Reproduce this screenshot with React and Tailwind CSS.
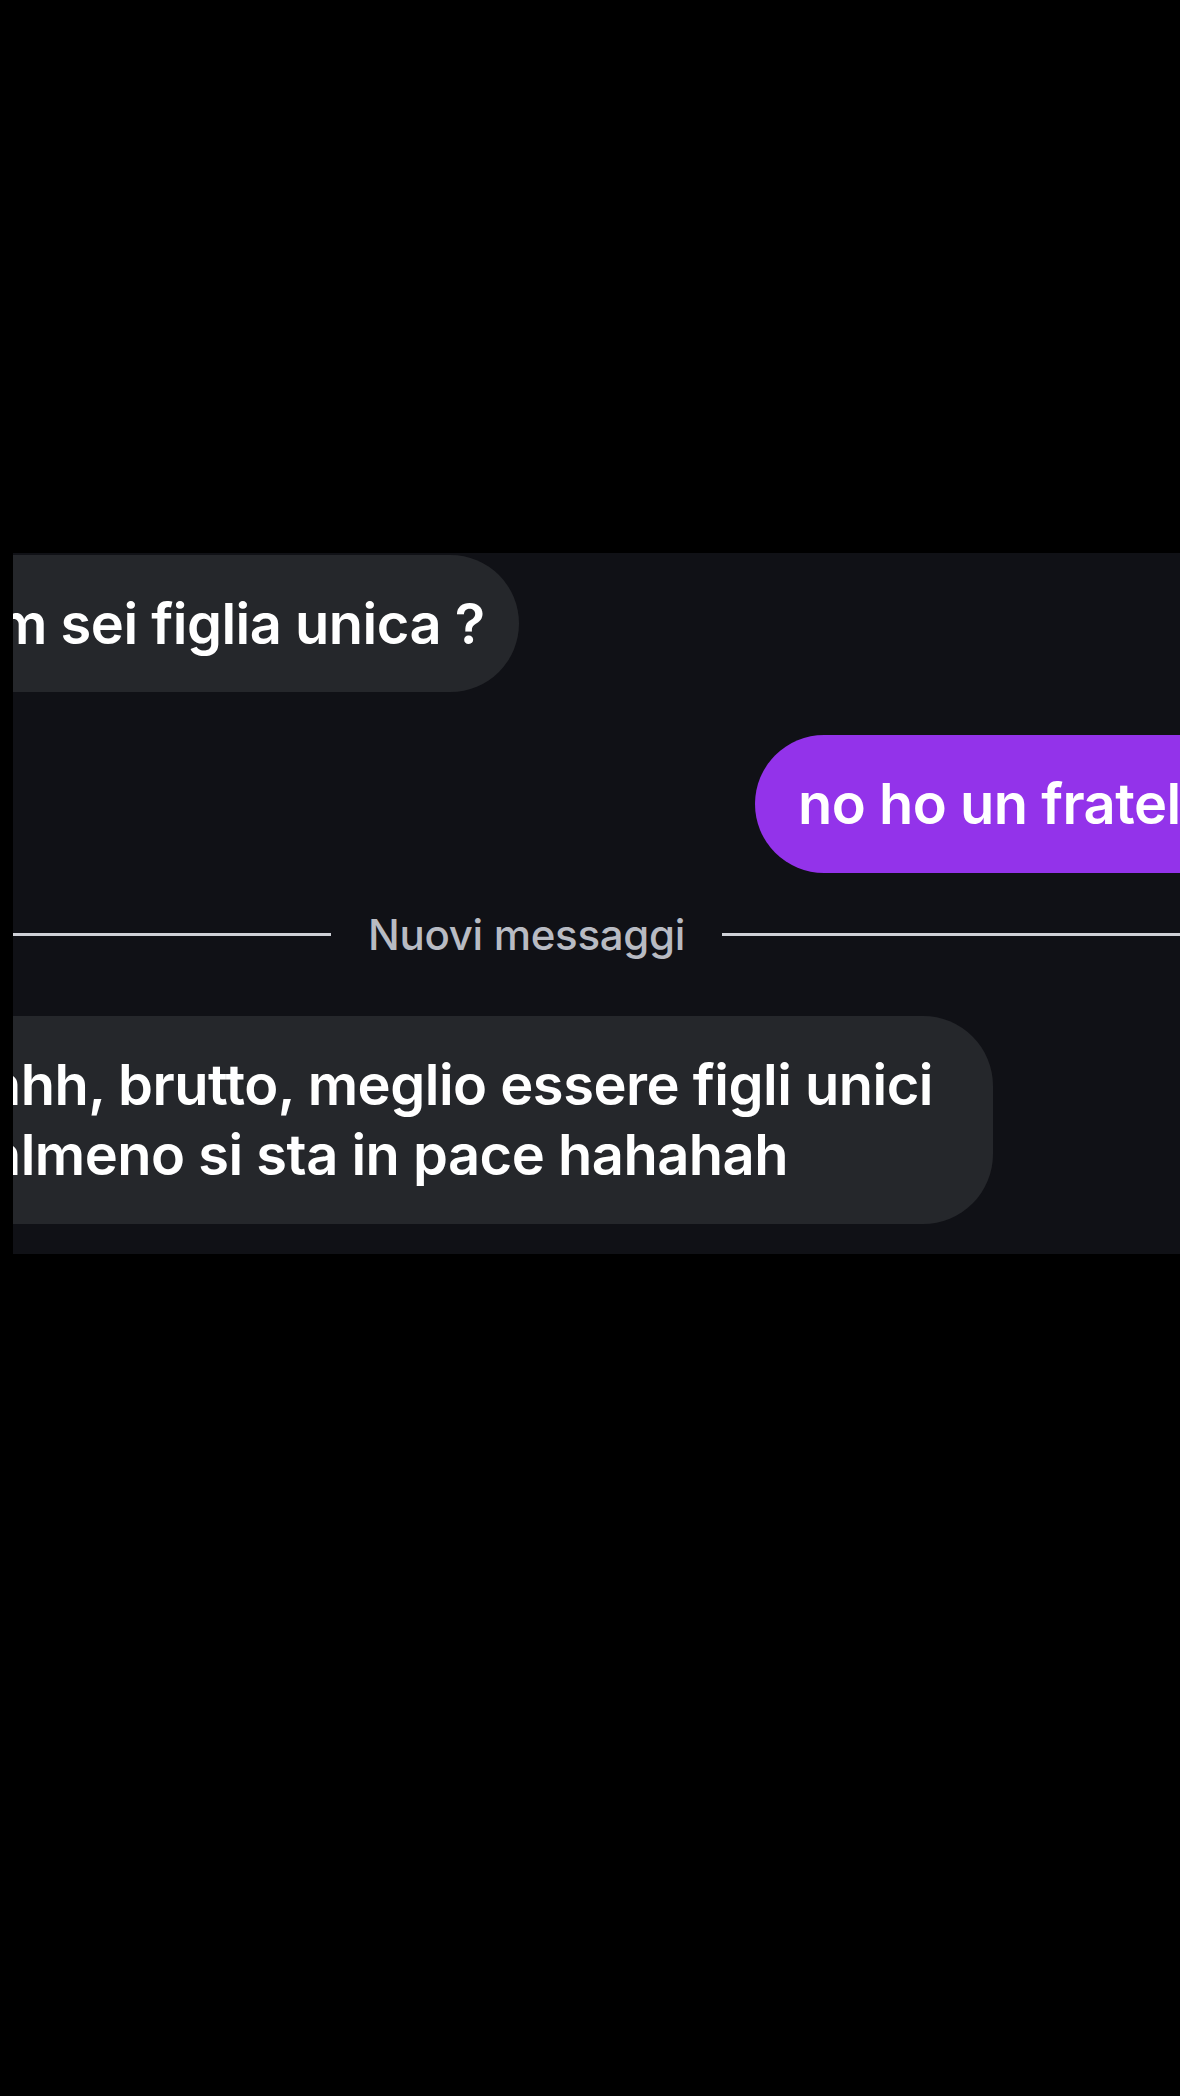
export default function App() {
  const font = { fontFamily: '"Inter", "Noto Sans", "Liberation Sans", sans-serif' };
  return (
    <div className="w-[1180px] h-[2096px] bg-black flex flex-col" style={font}>
      <div className="h-[553px] shrink-0" />
      <div className="ml-[13px] h-[701px] bg-[#101116] overflow-hidden flex flex-col shrink-0">
        <div className="mt-[2px] h-[137px] w-[506px] bg-[#25272b] rounded-r-[70px] flex items-center overflow-hidden">
          <span className="-ml-[16px] text-[56px] font-semibold text-white whitespace-nowrap tracking-[-0.5px]">
            m sei figlia unica ?
          </span>
        </div>
        <div className="mt-[43px] flex justify-end">
          <div className="h-[138px] w-[425px] bg-[#9333ea] rounded-l-[70px] flex items-center overflow-hidden">
            <span className="pl-[43px] text-[56px] font-semibold text-white whitespace-nowrap tracking-[-0.5px]">
              no ho un fratello
            </span>
          </div>
        </div>
        <div className="mt-[36px] h-[50px] flex items-center">
          <div className="w-[318px] h-[3px] bg-[#cfd1d7]" />
          <span className="mx-[37px] text-[42px] font-medium text-[#b8bbc3] whitespace-nowrap tracking-[-0.3px]">
            Nuovi messaggi
          </span>
          <div className="flex-1 h-[3px] bg-[#cfd1d7]" />
        </div>
        <div className="mt-[57px] h-[208px] w-[980px] bg-[#25272b] rounded-r-[70px] flex flex-col justify-center overflow-hidden">
          <div className="-ml-[24px] text-[56px] leading-[70px] font-semibold text-white whitespace-nowrap tracking-[-0.5px]">
            <div>ahh, brutto, meglio essere figli unici</div>
            <div>almeno si sta in pace hahahah</div>
          </div>
        </div>
      </div>
    </div>
  );
}
